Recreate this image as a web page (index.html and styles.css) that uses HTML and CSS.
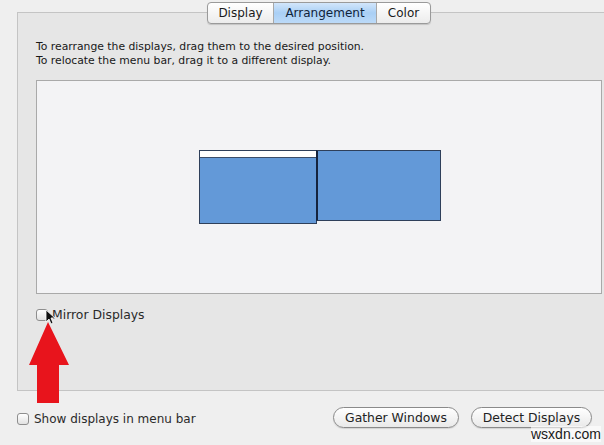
FILE: index.html
```html
<!DOCTYPE html>
<html>
<head>
<meta charset="utf-8">
<link rel="stylesheet" href="styles.css">
</head>
<body>
<div class="page">
  <div class="group">
    <div class="tabs">
      <span class="tab">Display</span>
      <span class="tab tab-on">Arrangement</span>
      <span class="tab">Color</span>
    </div>
    <p class="help">To rearrange the displays, drag them to the desired position.<br>To relocate the menu bar, drag it to a different display.</p>
    <div class="canvas">
      <div class="screen screen-main"><div class="menubar"></div></div>
      <div class="screen screen-second"></div>
    </div>
    <label class="check mirror"><span class="box"></span>Mirror Displays</label>
    <svg class="cursor" width="10" height="16" viewBox="0 0 10 16"><path d="M1 1 L1 13 L4 10 L6 15 L8 14 L6 9 L10 9 Z" fill="#111" stroke="#fff" stroke-width="0.8"/></svg>
    <svg class="arrow" width="42" height="82" viewBox="0 0 42 82"><path d="M19 0 L40 43 L30 43 L30 81 L8 81 L8 43 L0 43 Z" fill="#e8141c"/></svg>
  </div>
  <div class="footer">
    <label class="check show"><span class="box"></span>Show displays in menu bar</label>
    <div class="buttons">
      <span class="btn btn-gather">Gather Windows</span>
      <span class="btn btn-detect">Detect Displays</span>
    </div>
  </div>
  <div class="mark">wsxdn.com</div>
</div>
</body>
</html>
```
FILE: styles.css
```css
html, body {
  margin: 0;
  padding: 0;
}
body {
  width: 604px;
  height: 445px;
  overflow: hidden;
  background: #efefef;
  font-family: "DejaVu Sans", "Liberation Sans", sans-serif;
  color: #222;
}
.page {
  position: relative;
  width: 604px;
  height: 445px;
  padding-top: 12px;
  box-sizing: border-box;
}
.group {
  position: relative;
  margin-left: 17px;
  width: 600px;
  height: 379px;
  background: #e6e6e6;
  border: 1px solid #c4c4c4;
  border-right: none;
  box-sizing: border-box;
  padding: 27px 0 0 18px;
}
.tabs {
  position: absolute;
  top: -11px;
  left: 189px;
  display: flex;
  height: 20px;
  border: 1px solid #9a9a9a;
  border-radius: 4px;
  background: linear-gradient(#ffffff, #ececec);
  box-shadow: 0 1px 1px rgba(0,0,0,0.15);
  overflow: hidden;
}
.tab {
  display: flex;
  align-items: center;
  justify-content: center;
  font-size: 12px;
  color: #1a1a1a;
  border-left: 1px solid #a8a8a8;
}
.tab:first-child { border-left: none; width: 65px; }
.tab-on {
  width: 102px;
  background: linear-gradient(#d2e6fb, #a9cff5 50%, #bcdaf8);
  color: #10233a;
}
.tab:last-child { width: 53px; }
.help {
  margin: 0;
  font-size: 10.8px;
  line-height: 14px;
  color: #181818;
  height: 40px;
}
.canvas {
  width: 566px;
  height: 214px;
  background: #f3f3f5;
  border: 1px solid #a9a9a9;
  box-sizing: border-box;
  display: flex;
  align-items: flex-start;
  padding: 69px 0 0 162px;
}
.screen {
  background: #6399d8;
  border: 1px solid #2e3f5a;
  box-sizing: border-box;
}
.screen-main {
  width: 118px;
  height: 74px;
}
.menubar {
  height: 6px;
  background: #ffffff;
  border-bottom: 1px solid #3b4d68;
}
.screen-second {
  width: 125px;
  height: 71px;
  border-left: 2px solid #15233d;
  margin-left: -1px;
}
.check {
  display: flex;
  align-items: center;
  font-size: 12.4px;
  color: #2a2a2a;
}
.box {
  width: 12px;
  height: 12px;
  border: 1px solid #8e8e8e;
  border-radius: 3px;
  background: linear-gradient(#ffffff, #e2e2e2);
  box-sizing: border-box;
  margin-right: 4px;
}
.mirror {
  margin-top: 13px;
}
.cursor {
  position: absolute;
  left: 27px;
  top: 296px;
}
.arrow {
  position: absolute;
  left: 11px;
  top: 309px;
}
.footer {
  display: flex;
  justify-content: space-between;
  align-items: center;
  padding: 16px 12px 0 17px;
}
.show {
  margin-top: 2px;
  font-size: 12px;
}
.show .box {
  margin-right: 5px;
}
.buttons {
  display: flex;
  gap: 12px;
}
.btn {
  display: flex;
  align-items: center;
  justify-content: center;
  height: 21px;
  border: 1px solid #8a8a8a;
  border-radius: 11px;
  background: linear-gradient(#ffffff, #e9e9e9);
  box-sizing: border-box;
  font-size: 12.4px;
  color: #222;
  box-shadow: 0 1px 1px rgba(0,0,0,0.12);
}
.btn-gather { width: 126px; }
.btn-detect { width: 121px; }
.mark {
  position: absolute;
  left: 531px;
  top: 426px;
  font-family: "Liberation Sans", sans-serif;
  font-size: 14px;
  color: #1a1a1a;
  background: rgba(255,255,255,0.6);
}
```
